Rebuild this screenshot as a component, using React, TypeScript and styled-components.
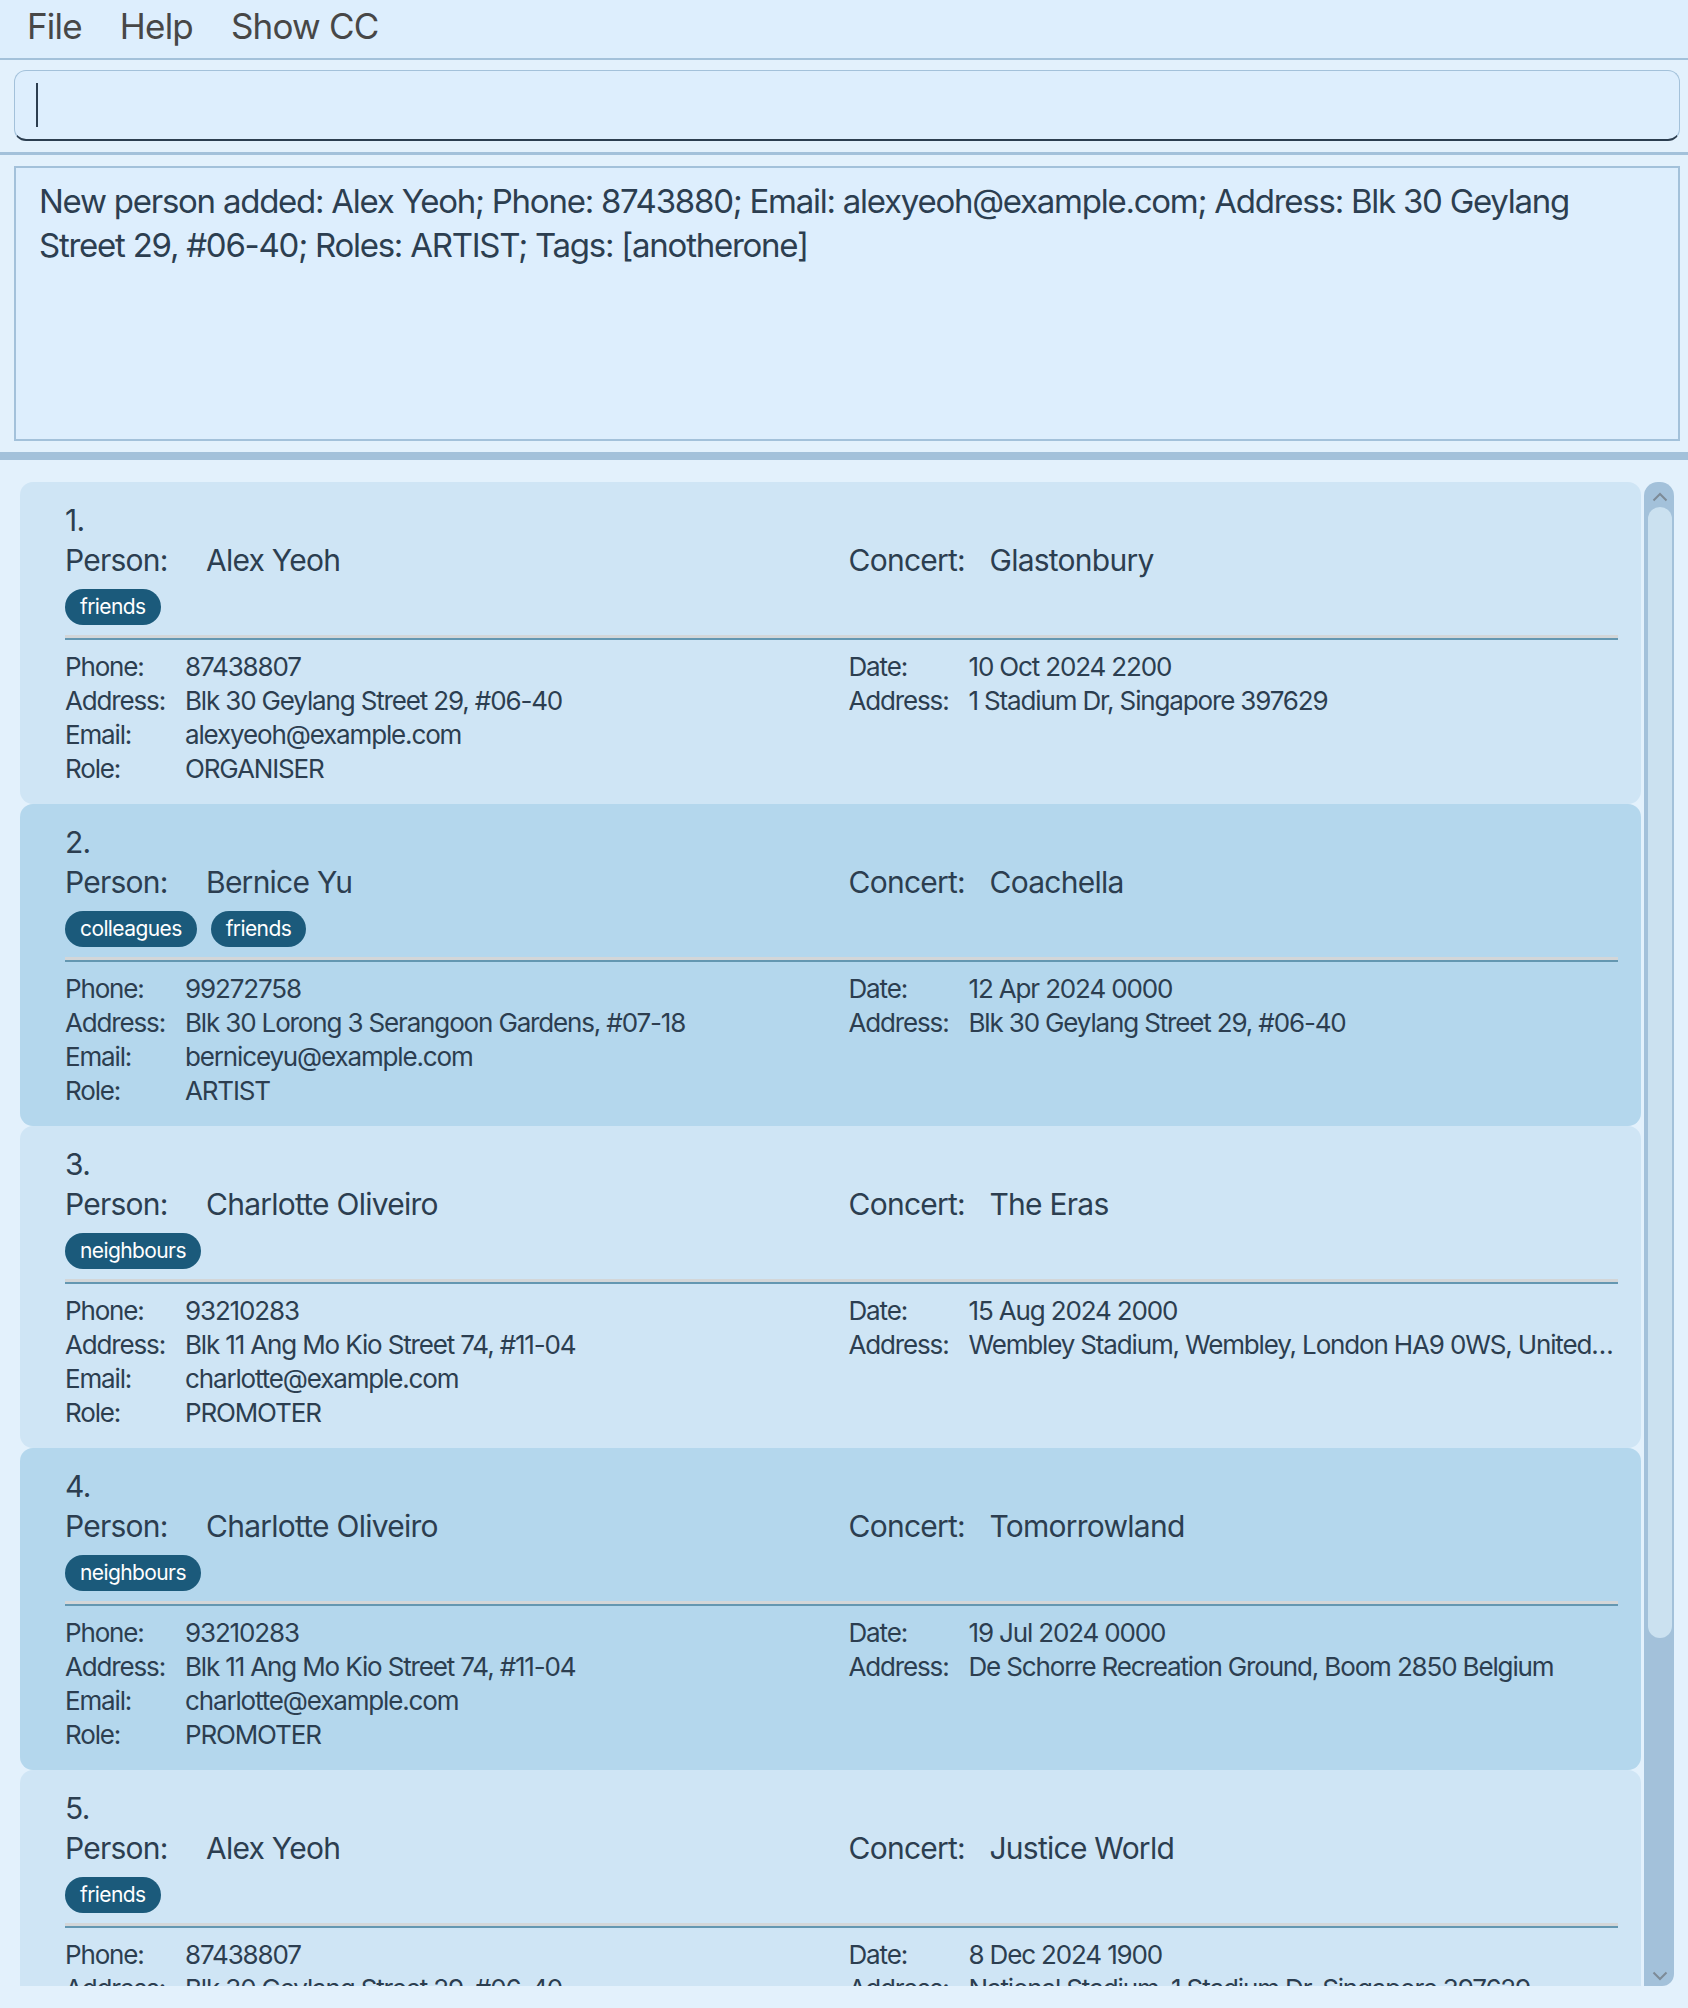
import React from "react";
import styled, { createGlobalStyle } from "styled-components";

const GlobalStyle = createGlobalStyle`
  html, body {
    margin: 0;
    padding: 0;
    background: #e3f1fc;
    font-family: Inter, "Noto Sans", "Liberation Sans", sans-serif;
  }
  * { box-sizing: border-box; }
`;

const Page = styled.div`
  width: 1688px;
  height: 2008px;
  display: flex;
  flex-direction: column;
  background: #e3f1fc;
  overflow: hidden;
`;

const MenuBar = styled.div`
  height: 60px;
  flex: none;
  display: flex;
  align-items: flex-start;
  padding-left: 8px;
  background: #ddeefd;
  border-bottom: 2px solid #a3c1da;
`;

const MenuItem = styled.div`
  font-size: 35px;
  line-height: 52px;
  letter-spacing: -0.8px;
  color: #474747;
  padding: 0 19px;
`;

const CommandArea = styled.div`
  flex: none;
  padding: 10px 8px 11px 14px;
  border-bottom: 3px solid #a3c1da;
`;

const CommandBox = styled.div`
  height: 71px;
  display: flex;
  align-items: center;
  padding-left: 21px;
  background: #ddeefd;
  border: 1.5px solid #a3c1da;
  border-bottom: 2px solid #2c3e50;
  border-radius: 12px;
`;

const Caret = styled.span`
  display: inline-block;
  width: 1.5px;
  height: 44px;
  background: #2c3e50;
`;

const ResultArea = styled.div`
  flex: none;
  padding: 11px 8px 11px 14px;
  border-bottom: 8px solid #a3c1da;
`;

const ResultBox = styled.div`
  height: 275px;
  padding: 11px 40px 0 23px;
  background: #ddeefd;
  border: 2px solid #a3c1da;
  color: #2c3e50;
  font-size: 33px;
  line-height: 44px;
  letter-spacing: -1.25px;
`;

const ListArea = styled.div`
  flex: 1;
  min-height: 0;
  display: flex;
  padding: 22px 14px 22px 20px;
`;

const CardList = styled.div`
  flex: 1;
  min-width: 0;
  display: flex;
  flex-direction: column;
  overflow: hidden;
`;

const Card = styled.div<{ $even: boolean }>`
  flex: none;
  height: 322px;
  padding: 18px 23px 0 45px;
  border-radius: 13px;
  background: ${(p) => (p.$even ? "#b4d7ed" : "#cfe5f5")};
  color: #2c3e50;
`;

const Index = styled.div`
  font-size: 30px;
  line-height: 40px;
  letter-spacing: -0.7px;
`;

const TwoCols = styled.div`
  display: grid;
  grid-template-columns: 1fr 1fr;
  column-gap: 14px;
`;

const Column = styled.div`
  display: flex;
  flex-direction: column;
  min-width: 0;
`;

const HeadRow = styled.div`
  display: flex;
  font-size: 30px;
  line-height: 40px;
  letter-spacing: -0.75px;
`;

const HeadLabel = styled.span`
  flex: none;
  width: 141px;
`;

const Tags = styled.div`
  display: flex;
  gap: 14px;
  margin-top: 9px;
`;

const Tag = styled.span`
  height: 36px;
  padding: 0 15px;
  border-radius: 18px;
  background: #1b5a7b;
  color: #ffffff;
  font-size: 21px;
  line-height: 36px;
  letter-spacing: -0.6px;
`;

const Divider = styled.div`
  margin-top: 10px;
  height: 5px;
  border-top: 3px solid #d3d6d8;
  border-bottom: 2px solid #6497b1;
`;

const Details = styled(TwoCols)`
  margin-top: 10px;
`;

const DetailRow = styled.div`
  display: flex;
  font-size: 26px;
  line-height: 34px;
  letter-spacing: -1.15px;
  min-width: 0;
`;

const DetailLabel = styled.span`
  flex: none;
  width: 120px;
`;

const DetailValue = styled.span`
  flex: 1;
  min-width: 0;
  white-space: nowrap;
  overflow: hidden;
  text-overflow: ellipsis;
`;

const ScrollTrack = styled.div`
  flex: none;
  width: 30px;
  margin-left: 3px;
  display: flex;
  flex-direction: column;
  align-items: center;
  background: #a3c1da;
  border-radius: 14px 14px 12px 0;
  padding: 4px 2px 0 4px;
`;

const Arrow = styled.div`
  height: 21px;
  display: flex;
  align-items: center;
  justify-content: center;
  align-self: center;
`;

const Thumb = styled.div`
  width: 24px;
  height: 1131px;
  border-radius: 12px;
  background: #cbe1f0;
`;

const Spacer = styled.div`
  flex: 1;
`;

type Person = {
  name: string;
  tags: string[];
  concert: string;
  phone: string;
  address: string;
  email: string;
  role: string;
  date: string;
  venue: string;
};

const people: Person[] = [
  {
    name: "Alex Yeoh",
    tags: ["friends"],
    concert: "Glastonbury",
    phone: "87438807",
    address: "Blk 30 Geylang Street 29, #06-40",
    email: "alexyeoh@example.com",
    role: "ORGANISER",
    date: "10 Oct 2024 2200",
    venue: "1 Stadium Dr, Singapore 397629",
  },
  {
    name: "Bernice Yu",
    tags: ["colleagues", "friends"],
    concert: "Coachella",
    phone: "99272758",
    address: "Blk 30 Lorong 3 Serangoon Gardens, #07-18",
    email: "berniceyu@example.com",
    role: "ARTIST",
    date: "12 Apr 2024 0000",
    venue: "Blk 30 Geylang Street 29, #06-40",
  },
  {
    name: "Charlotte Oliveiro",
    tags: ["neighbours"],
    concert: "The Eras",
    phone: "93210283",
    address: "Blk 11 Ang Mo Kio Street 74, #11-04",
    email: "charlotte@example.com",
    role: "PROMOTER",
    date: "15 Aug 2024 2000",
    venue: "Wembley Stadium, Wembley, London HA9 0WS, United Kingdom",
  },
  {
    name: "Charlotte Oliveiro",
    tags: ["neighbours"],
    concert: "Tomorrowland",
    phone: "93210283",
    address: "Blk 11 Ang Mo Kio Street 74, #11-04",
    email: "charlotte@example.com",
    role: "PROMOTER",
    date: "19 Jul 2024 0000",
    venue: "De Schorre Recreation Ground, Boom 2850 Belgium",
  },
  {
    name: "Alex Yeoh",
    tags: ["friends"],
    concert: "Justice World",
    phone: "87438807",
    address: "Blk 30 Geylang Street 29, #06-40",
    email: "alexyeoh@example.com",
    role: "ORGANISER",
    date: "8 Dec 2024 1900",
    venue: "National Stadium, 1 Stadium Dr, Singapore 397629",
  },
];

const Chevron: React.FC<{ up?: boolean }> = ({ up }) => (
  <svg width="16" height="10" viewBox="0 0 16 10">
    <polyline
      points={up ? "1.5,8.5 8,2 14.5,8.5" : "1.5,1.5 8,8 14.5,1.5"}
      fill="none"
      stroke="#7d8b97"
      strokeWidth="2"
    />
  </svg>
);

const Detail: React.FC<{ label: string; value: string }> = ({ label, value }) => (
  <DetailRow>
    <DetailLabel>{label}</DetailLabel>
    <DetailValue>{value}</DetailValue>
  </DetailRow>
);

const PersonCard: React.FC<{ p: Person; i: number }> = ({ p, i }) => (
  <Card $even={i % 2 === 1}>
    <Index>{i + 1}.</Index>
    <TwoCols>
      <Column>
        <HeadRow>
          <HeadLabel>Person:</HeadLabel>
          <span>{p.name}</span>
        </HeadRow>
        <Tags>
          {p.tags.map((t) => (
            <Tag key={t}>{t}</Tag>
          ))}
        </Tags>
      </Column>
      <Column>
        <HeadRow>
          <HeadLabel>Concert:</HeadLabel>
          <span>{p.concert}</span>
        </HeadRow>
      </Column>
    </TwoCols>
    <Divider />
    <Details>
      <Column>
        <Detail label="Phone:" value={p.phone} />
        <Detail label="Address:" value={p.address} />
        <Detail label="Email:" value={p.email} />
        <Detail label="Role:" value={p.role} />
      </Column>
      <Column>
        <Detail label="Date:" value={p.date} />
        <Detail label="Address:" value={p.venue} />
      </Column>
    </Details>
  </Card>
);

export default function App() {
  return (
    <Page>
      <GlobalStyle />
      <MenuBar>
        <MenuItem>File</MenuItem>
        <MenuItem>Help</MenuItem>
        <MenuItem>Show CC</MenuItem>
      </MenuBar>
      <CommandArea>
        <CommandBox>
          <Caret />
        </CommandBox>
      </CommandArea>
      <ResultArea>
        <ResultBox>
          New person added: Alex Yeoh; Phone: 8743880; Email: alexyeoh@example.com; Address: Blk 30 Geylang
          Street 29, #06-40; Roles: ARTIST; Tags: [anotherone]
        </ResultBox>
      </ResultArea>
      <ListArea>
        <CardList>
          {people.map((p, i) => (
            <PersonCard key={i} p={p} i={i} />
          ))}
        </CardList>
        <ScrollTrack>
          <Arrow>
            <Chevron up />
          </Arrow>
          <Thumb />
          <Spacer />
          <Arrow>
            <Chevron />
          </Arrow>
        </ScrollTrack>
      </ListArea>
    </Page>
  );
}
